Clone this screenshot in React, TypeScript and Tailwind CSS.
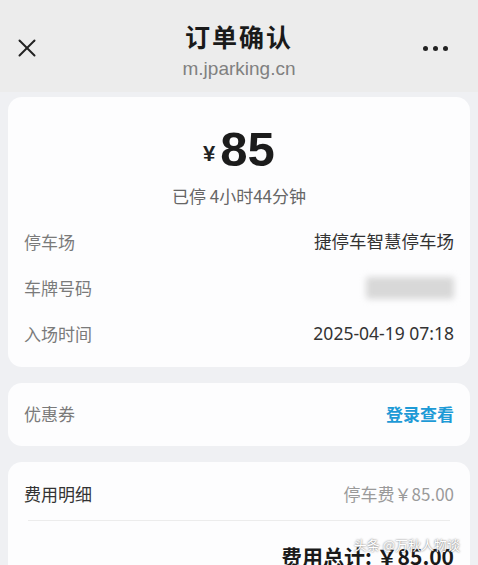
import { X } from 'lucide-react'

type RowProps = {
  label: string
  children: React.ReactNode
}

function Row({ label, children }: RowProps) {
  return (
    <div className="flex h-[46px] items-center justify-between">
      <span className="text-[17px] text-[#7a7a7a]">{label}</span>
      <span className="text-[17.5px] text-[#333]">{children}</span>
    </div>
  )
}

export default function App() {
  const cn = '"Noto Sans CJK SC", "Noto Sans", sans-serif'
  return (
    <div
      className="h-[565px] w-[478px] overflow-hidden bg-[#eff0f3]"
      style={{ fontFamily: cn }}
    >
      {/* header */}
      <header className="relative flex h-[92px] flex-col items-center bg-[#ececec] pt-[18px]">
        <X className="absolute left-[12px] top-[33px] h-[30px] w-[30px] text-[#222]" strokeWidth={1.6} />
        <h1 className="text-[25px] font-bold leading-[36px] tracking-[2px] text-[#1a1a1a]">订单确认</h1>
        <p className="mt-[2px] text-[19px] leading-[26px] text-[#808080]" style={{ fontFamily: '"Liberation Sans", sans-serif' }}>
          m.jparking.cn
        </p>
        <div className="absolute right-[30px] top-[46px] flex gap-[5px]">
          <span className="h-[5px] w-[5px] rounded-full bg-[#222]" />
          <span className="h-[5px] w-[5px] rounded-full bg-[#222]" />
          <span className="h-[5px] w-[5px] rounded-full bg-[#222]" />
        </div>
      </header>

      <main className="flex flex-col gap-[16px] px-[8px] pt-[5px]">
        {/* amount card */}
        <section className="rounded-[14px] bg-[#fdfdfe] px-[16px] pb-[10px] pt-[28px]">
          <div className="flex items-end justify-center" style={{ fontFamily: '"Liberation Sans", sans-serif' }}>
            <span className="mb-[3px] mr-[5px] text-[22px] font-bold text-[#222]">¥</span>
            <span className="text-[49px] font-bold leading-[48px] text-[#1c1c1c]">85</span>
          </div>
          <p className="mt-[10px] text-center text-[17px] text-[#666]">已停 4小时44分钟</p>
          <div className="mt-[10px]">
            <Row label="停车场">捷停车智慧停车场</Row>
            <Row label="车牌号码">
              <span className="block h-[22px] w-[88px] rounded-[3px] bg-[#d8d8d8] blur-[3px]" />
            </Row>
            <Row label="入场时间">
              <span style={{ fontFamily: '"Noto Sans", sans-serif' }}>2025-04-19 07:18</span>
            </Row>
          </div>
        </section>

        {/* coupon card */}
        <section className="flex h-[63px] items-center justify-between rounded-[14px] bg-[#fdfdfe] px-[16px]">
          <span className="text-[17px] text-[#7a7a7a]">优惠券</span>
          <span className="text-[17px] font-bold text-[#1d9ad6]">登录查看</span>
        </section>

        {/* fee card */}
        <section className="rounded-t-[14px] bg-[#fdfdfe] px-[16px] pt-[19px]">
          <div className="flex items-center justify-between">
            <span className="text-[17px] text-[#333]">费用明细</span>
            <span className="text-[17px] text-[#9a9a9a]">停车费￥85.00</span>
          </div>
          <div className="mx-[4px] mt-[14px] h-px bg-[#ececec]" />
          <div className="relative mt-[20px] flex justify-end">
            <span className="text-[21px] font-bold text-[#1a1a1a]">费用总计: ￥85.00</span>
            <span className="absolute right-[-6px] top-[-6px] text-[13px] text-white [text-shadow:0_0_2px_#555]">
              头条 @万秋人物谈
            </span>
          </div>
        </section>
      </main>
    </div>
  )
}
